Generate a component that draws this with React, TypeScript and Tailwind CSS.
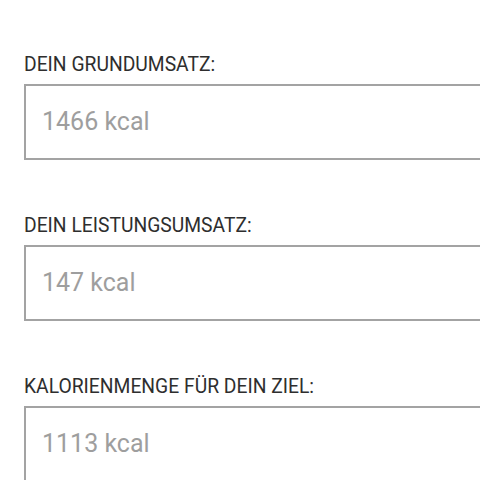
const rows = [
  { label: "DEIN GRUNDUMSATZ:", value: "1466 kcal" },
  { label: "DEIN LEISTUNGSUMSATZ:", value: "147 kcal" },
  { label: "KALORIENMENGE FÜR DEIN ZIEL:", value: "1113 kcal" },
];

export default function App() {
  return (
    <div
      className="w-[480px] h-[480px] overflow-hidden bg-white pl-6 pt-[54px]"
      style={{ fontFamily: "Roboto, 'Liberation Sans', sans-serif" }}
    >
      <div className="w-[520px] flex flex-col gap-[55px]">
        {rows.map((r) => (
          <div key={r.label}>
            <div className="text-[19.3px] leading-[22px] text-[#2e2e2e] mb-2">
              {r.label}
            </div>
            <div className="h-[76px] border-2 border-[#a3a3a3] flex items-center pl-4">
              <span className="text-[25px] text-[#9e9e9e]">{r.value}</span>
            </div>
          </div>
        ))}
      </div>
    </div>
  );
}
